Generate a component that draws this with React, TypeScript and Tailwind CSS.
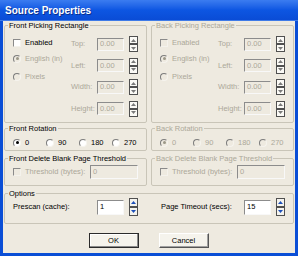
import React from "react";

const DIS = "text-[#ACA899]";

function Check({ disabled }: { disabled?: boolean }) {
  return (
    <span
      className={`block w-[8px] h-[8px] shrink-0 border border-t-[#8a8a8a] border-l-[#8a8a8a] border-b-[#f4f2ec] border-r-[#f4f2ec] ${
        disabled ? "bg-[#EEEAE0]" : "bg-white"
      }`}
    />
  );
}

function Radio({ checked, disabled }: { checked?: boolean; disabled?: boolean }) {
  return (
    <span
      className={`flex items-center justify-center w-[8px] h-[8px] shrink-0 rounded-full border border-t-[#7c7c7c] border-l-[#7c7c7c] border-b-[#f6f4ee] border-r-[#f6f4ee] ${
        disabled ? "bg-[#EEEAE0]" : "bg-white"
      }`}
    >
      {checked && (
        <span
          className={`block w-[3px] h-[3px] rounded-full ${
            disabled ? "bg-[#9c9888]" : "bg-black"
          }`}
        />
      )}
    </span>
  );
}

function Field({
  value,
  disabled,
  w,
  h = "h-[13px]",
}: {
  value: string;
  disabled?: boolean;
  w: string;
  h?: string;
}) {
  return (
    <div
      className={`${w} ${h} shrink-0 flex items-center px-[2px] border border-t-[#8c8c8c] border-l-[#8c8c8c] border-b-[#f8f8f8] border-r-[#f8f8f8] ${
        disabled ? `bg-[#EEEAE0] ${DIS}` : "bg-white text-black"
      }`}
    >
      {value}
    </div>
  );
}

function Spin({ disabled, tall }: { disabled?: boolean; tall?: boolean }) {
  const half = `${tall ? "h-[9px]" : "h-[8px]"} w-[9px] flex items-center justify-center border border-[#505050] ${
    disabled ? "bg-[#FBFAF6]" : "bg-[#F4F3EE]"
  }`;
  const fill = disabled ? "#7a7a7a" : "#1D4FB8";
  return (
    <div className="flex flex-col shrink-0">
      <div className={half}>
        <svg width="5" height="3" viewBox="0 0 5 3">
          <polygon points="2.5,0 5,3 0,3" fill={fill} />
        </svg>
      </div>
      <div className={half}>
        <svg width="5" height="3" viewBox="0 0 5 3">
          <polygon points="0,0 5,0 2.5,3" fill={fill} />
        </svg>
      </div>
    </div>
  );
}

function Group({
  title,
  disabled,
  className,
  children,
}: {
  title: string;
  disabled?: boolean;
  className?: string;
  children: React.ReactNode;
}) {
  return (
    <fieldset className={`border border-[#C9C5B8] rounded-[2px] ${className ?? ""}`}>
      <legend className={`ml-[3px] px-[1px] leading-[9px] ${disabled ? DIS : "text-black"}`}>
        {title}
      </legend>
      {children}
    </fieldset>
  );
}

function PickingRect({ side, disabled }: { side: string; disabled?: boolean }) {
  const rows = ["Top:", "Left:", "Width:", "Height:"];
  return (
    <Group title={`${side} Picking Rectangle`} disabled={disabled} className="w-[143px] h-[102px]">
      <div className="flex">
        <div className="pl-[8px] w-[66px] flex flex-col">
          <div className="mt-[8px] h-[9px] flex items-center gap-[4px]">
            <Check disabled={disabled} />
            <span className={disabled ? DIS : "text-black"}>Enabled</span>
          </div>
          <div className={`mt-[7px] h-[9px] flex items-center gap-[4px] ${DIS}`}>
            <Radio checked disabled />
            <span>English (in)</span>
          </div>
          <div className={`mt-[9px] h-[9px] flex items-center gap-[4px] ${DIS}`}>
            <Radio disabled />
            <span>Pixels</span>
          </div>
        </div>
        <div className="mt-[6px] flex flex-col gap-y-[5.5px]">
          {rows.map((r) => (
            <div key={r} className="h-[16px] flex items-center">
              <span className={`w-[26px] ${DIS}`}>{r}</span>
              <Field value="0.00" disabled w="w-[27px]" />
              <div className="ml-[5px]">
                <Spin disabled />
              </div>
            </div>
          ))}
        </div>
      </div>
    </Group>
  );
}

function Rotation({ side, disabled }: { side: string; disabled?: boolean }) {
  return (
    <Group title={`${side} Rotation`} disabled={disabled} className="w-[143px] h-[27px] mt-[1px]">
      <div className="flex pl-[8px] mt-[5px]">
        {["0", "90", "180", "270"].map((v, i) => (
          <div key={v} className={`w-[33px] h-[9px] flex items-center gap-[4px] ${disabled ? DIS : "text-black"}`}>
            <Radio checked={i === 0} disabled={disabled} />
            <span>{v}</span>
          </div>
        ))}
      </div>
    </Group>
  );
}

function Threshold({ side }: { side: string }) {
  return (
    <Group title={`${side} Delete Blank Page Threshold`} disabled={side === "Back"} className="w-[143px] h-[32px] mt-[3px]">
      <div className={`flex items-center pl-[8px] mt-[2px] h-[14px] ${DIS}`}>
        <Check disabled />
        <span className="ml-[4px] w-[65px]">Threshold (bytes):</span>
        <Field value="0" disabled w="w-[48px]" h="h-[14px]" />
      </div>
    </Group>
  );
}

export default function App() {
  return (
    <div
      className="w-[298px] h-[256px] flex flex-col bg-[#0A4ED6] text-[7.5px] overflow-hidden"
      style={{ fontFamily: '"Liberation Sans", Arial, sans-serif' }}
    >
      {/* title bar */}
      <div className="h-[21px] shrink-0 flex items-center pl-[5px] bg-gradient-to-b from-[#3B7CF0] via-[#0D56E2] to-[#0A4CD6] border-b border-[#3F7BE8]">
        <span className="text-white font-bold text-[10px] [text-shadow:1px_1px_0_#0A2F8C]">
          Source Properties
        </span>
      </div>

      {/* body */}
      <div className="flex-1 mx-[3px] mb-[3px] bg-[#EEEAE0] flex flex-col pl-[1px] pr-[2px]">
        <div className="flex gap-[4px]">
          <div className="flex flex-col">
            <PickingRect side="Front" />
            <Rotation side="Front" />
            <Threshold side="Front" />
          </div>
          <div className="flex flex-col">
            <PickingRect side="Back" disabled />
            <Rotation side="Back" disabled />
            <Threshold side="Back" />
          </div>
        </div>

        <Group title="Options" className="w-[290px] h-[35px] mt-[3px]">
          <div className="flex items-center pl-[8px] h-[18px] text-black">
            <span className="w-[84px]">Prescan (cache):</span>
            <Field value="1" w="w-[27px]" h="h-[15px]" />
            <div className="ml-[5px]">
              <Spin tall />
            </div>
            <span className="ml-[23px] w-[83px]">Page Timeout (secs):</span>
            <Field value="15" w="w-[27px]" h="h-[15px]" />
            <div className="ml-[5px]">
              <Spin tall />
            </div>
          </div>
        </Group>

        <div className="flex justify-center gap-[20px] mt-[9px]">
          <button className="w-[50px] h-[15px] bg-[#F5F3EC] border border-[#2b2b2b] shadow-[inset_-1px_-1px_0_#8a8a8a,inset_1px_1px_0_#ffffff] text-black">
            OK
          </button>
          <button className="w-[50px] h-[15px] bg-[#F5F3EC] border border-t-white border-l-white border-b-[#555] border-r-[#555] shadow-[inset_-1px_-1px_0_#a0a0a0] text-black">
            Cancel
          </button>
        </div>
      </div>
    </div>
  );
}
